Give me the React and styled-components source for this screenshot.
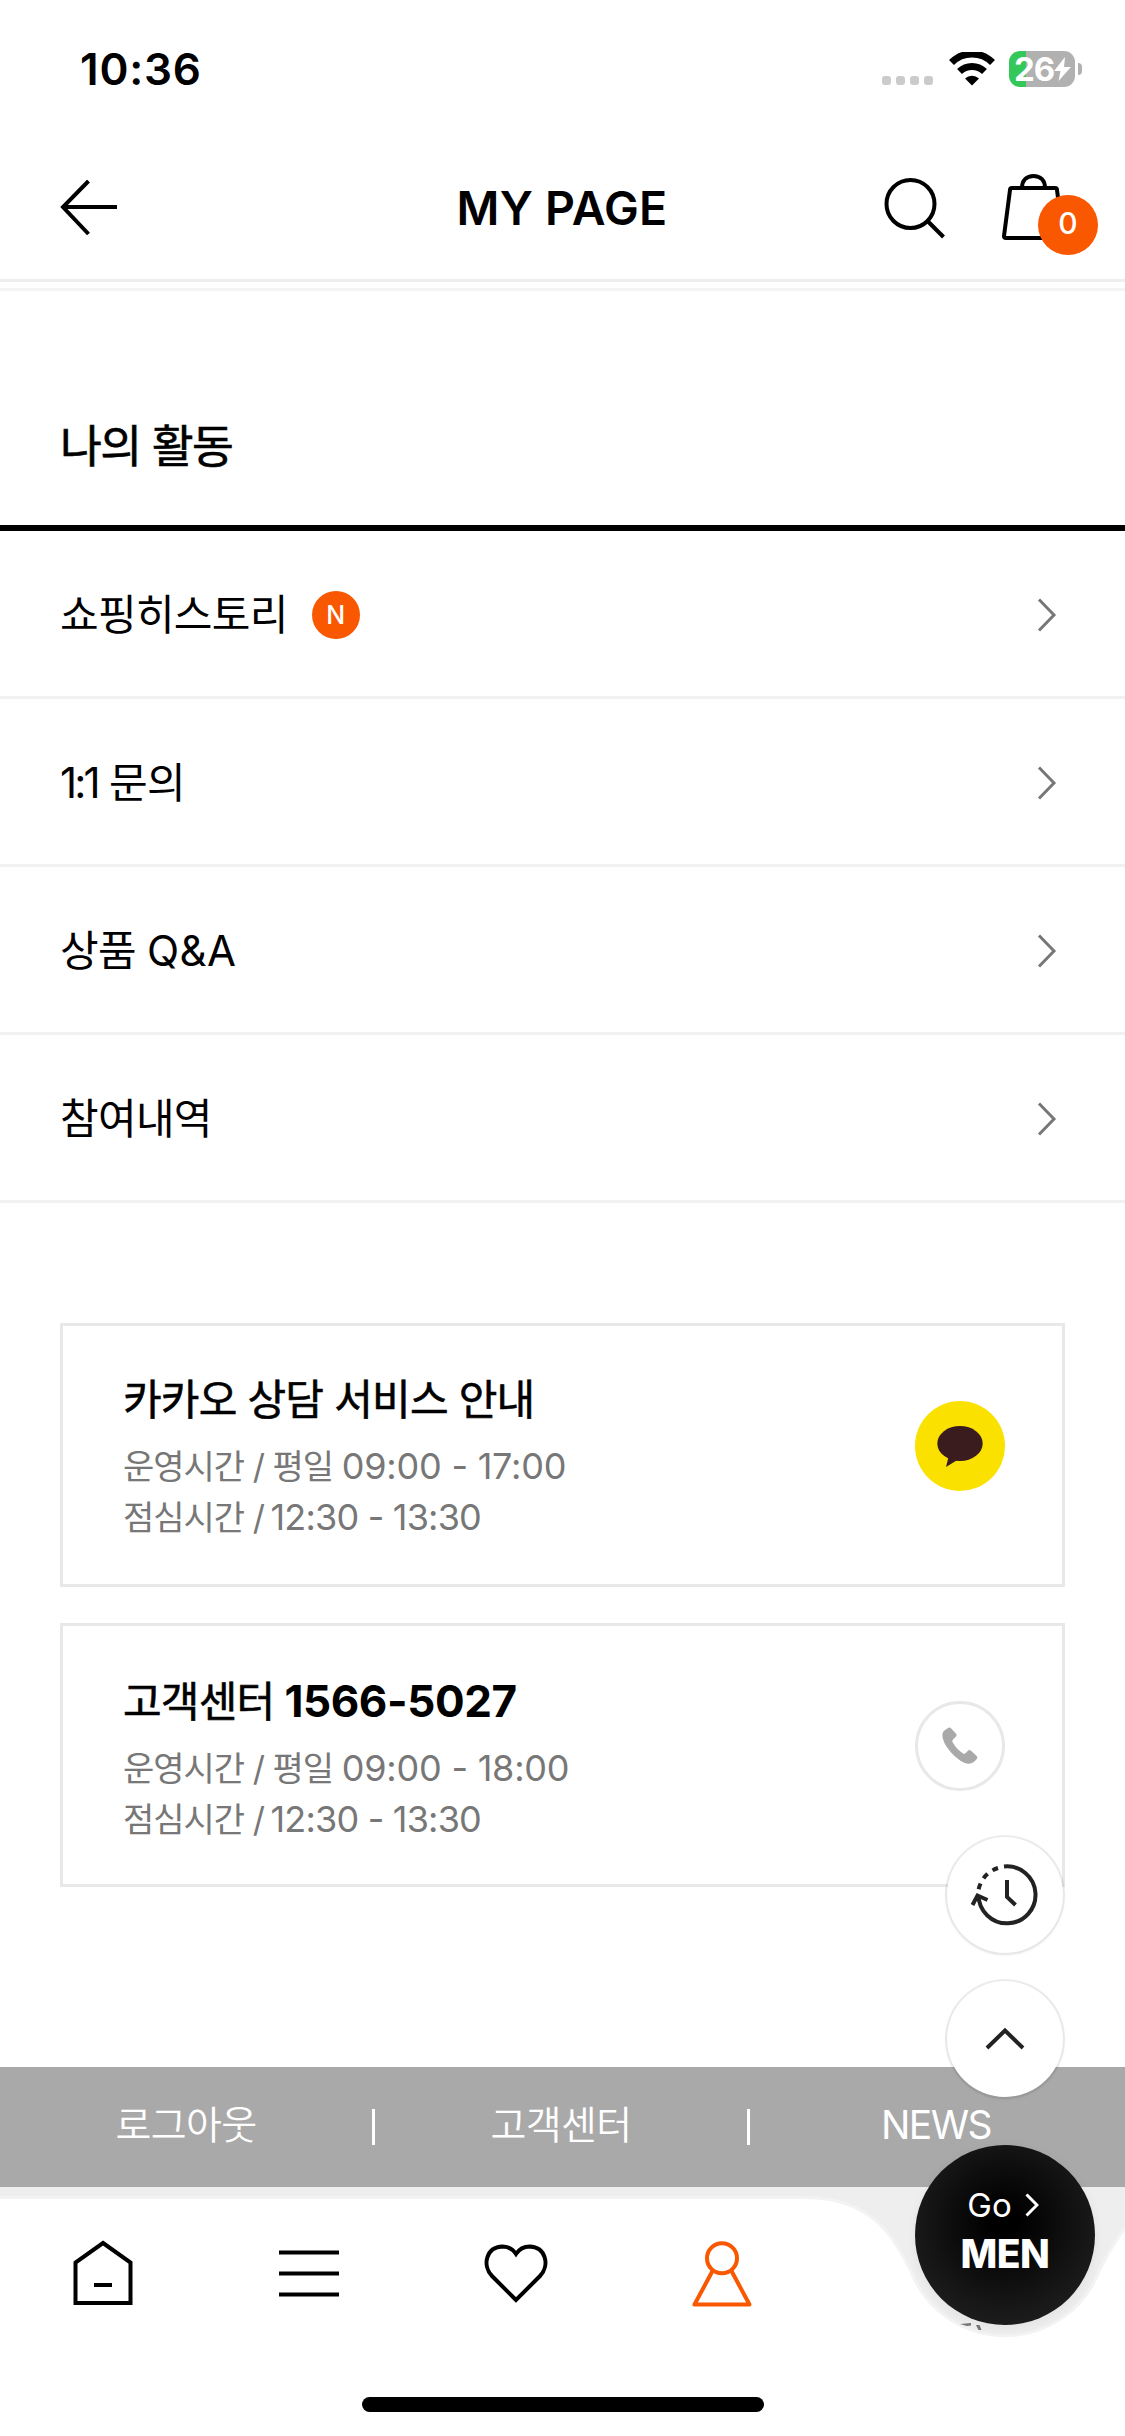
import React from "react";
import styled, { createGlobalStyle } from "styled-components";

const list = [
    { label: "쇼핑히스토리", isNew: true },
    { before: "1:1", spacing: -2.8, label: " 문의" },
    { label: "상품 ", after: "Q&A", spacing: 0.4 },
    { label: "참여내역" },
];

const App = () => {
    return (
        <Page>
            <GlobalStyle />
            <StatusBar>
                <Time>10:36</Time>
                <Signal>
                    <Dot />
                    <Dot />
                    <Dot />
                    <Dot />
                </Signal>
                <WifiIcon width="46" height="34" viewBox="0 0 46 34">
                    <path d="M2.5 10.5a29 29 0 0 1 41 0" strokeWidth="7" />
                    <path d="M10.5 19.5a18 18 0 0 1 25 0" strokeWidth="7" />
                    <path d="M16 26.5a10 10 0 0 1 14 0l-7 7z" fill="#000" stroke="none" />
                </WifiIcon>
                <Battery>
                    <Level>26</Level>
                    <svg width="17" height="24" viewBox="0 0 17 24">
                        <path d="M11 0L0 14h6.500L4.500 24 17 10h-7z" fill="#fff" />
                    </svg>
                </Battery>
                <BatteryTip />
            </StatusBar>

            <Header>
                <Icon width="58" height="56" viewBox="0 0 58 56">
                    <path d="M57 27H3M28.500 1L3 27l25.500 27" />
                </Icon>
                <Title>MY PAGE</Title>
                <HeaderActions>
                    <Icon width="62" height="64" viewBox="0 0 62 64">
                        <circle cx="27.500" cy="29" r="24" />
                        <path d="M44.500 46L60.500 62" />
                    </Icon>
                    <Bag>
                        <Icon width="66" height="66" viewBox="0 0 66 66">
                            <path
                                d="M11 14h43a2 2 0 0 1 2 2l6 46a2 2 0 0 1-2 2H5a2 2 0 0 1-2-2l6-46a2 2 0 0 1 2-2z"
                                strokeLinejoin="round"
                            />
                            <path d="M21 14c0-8 5-12 11.500-12S44 6 44 14" />
                        </Icon>
                        <Count>0</Count>
                    </Bag>
                </HeaderActions>
            </Header>
            <HeaderLine />

            <SectionTitle>나의 활동</SectionTitle>
            <List>
                {list.map((item) => (
                    <Item key={item.label}>
                        <Label>
                            {item.before && <Latin $spacing={item.spacing}>{item.before}</Latin>}
                            {item.label}
                            {item.after && <Latin $spacing={item.spacing}>{item.after}</Latin>}
                        </Label>
                        {item.isNew && <NewMark>N</NewMark>}
                        <Arrow width="20" height="34" viewBox="0 0 20 34">
                            <path d="M2 1.500l15 15.500L2 32.500" />
                        </Arrow>
                    </Item>
                ))}
            </List>

            <Cards>
                <Card>
                    <div>
                        <CardTitle>카카오 상담 서비스 안내</CardTitle>
                        <Hours>
                            운영시간 / 평일 <Clock>09:00 - 17:00</Clock>
                        </Hours>
                        <Hours>
                            점심시간 / <Clock $tight>12:30 - 13:30</Clock>
                        </Hours>
                    </div>
                    <Round $bg="#fae100">
                        <svg width="46" height="44" viewBox="0 0 46 44">
                            <ellipse cx="23" cy="19.500" rx="22.700" ry="17.500" fill="#3b1c1e" />
                            <path d="M12 31l-3 12 13-8z" fill="#3b1c1e" />
                        </svg>
                    </Round>
                </Card>
                <Card $low>
                    <div>
                        <CardTitle>
                            고객센터 <Phone>1566-5027</Phone>
                        </CardTitle>
                        <Hours>
                            운영시간 / 평일 <Clock>09:00 - 18:00</Clock>
                        </Hours>
                        <Hours>
                            점심시간 / <Clock $tight>12:30 - 13:30</Clock>
                        </Hours>
                    </div>
                    <Round $bg="#fff" $line>
                        <svg width="36" height="38" viewBox="0 0 36 38">
                            <path
                                d="M3 3L6.500.8q1.500-.8 2.700.6l5 5.600q1 1.200-.2 2.500l-3 3q-1.200 1.300-.4 2.700 4 7 10.500 11.300 1.200.8 2.400-.3l2.700-2.600q1.300-1 2.500 0l6 5.400q1.300 1.400.2 2.800-3.400 5-9 5Q19 36 9 25.500 0 15 .3 7.500.5 4.500 3 3z"
                                fill="#a9a9a9"
                            />
                        </svg>
                    </Round>
                </Card>
            </Cards>

            <Links>
                <Link>로그아웃</Link>
                <Link>고객센터</Link>
                <Link $latin>NEWS</Link>
            </Links>

            <TabBar>
                <TabShape width="1125" height="249" viewBox="0 0 1125 249">
                    <path
                        d="M-5 10.500H805C850 10.500 876 28 893 53C900 63 904 71 910 82A101 101 0 0 0 1100 82C1106 71 1113 56 1130 34V255H-5z"
                        fill="#fff"
                        stroke="#f3f3f3"
                        strokeWidth="3"
                    />
                    <path d="M960 137l11-1v2.500l-4 .5zM976 138l3.500 0 2 5-3 0z" fill="#777" />
                </TabShape>
                <Tab>
                    <Icon width="60" height="66" viewBox="0 0 60 66">
                        <path d="M30 3L57.500 22.500V63H2.500V22.500zM21 45h18" />
                    </Icon>
                </Tab>
                <Tab>
                    <Icon width="60" height="66" viewBox="0 0 60 66">
                        <path d="M0 12.500h60M0 33.500h60M0 54.500h60" />
                    </Icon>
                </Tab>
                <Tab>
                    <Icon width="64" height="66" viewBox="0 0 64 66">
                        <path d="M32 60L8 36C-2 25.500 2 7 18.500 6.500q8.500 0 13.500 7.500 5-7.500 13.500-7.500c16.500.5 20.500 19 10.500 29.500z" />
                    </Icon>
                </Tab>
                <Tab>
                    <Icon width="60" height="68" viewBox="0 0 60 68" $on>
                        <circle cx="30" cy="19.300" r="15" />
                        <path d="M20.500 32L2.500 65.500h55L39.500 32" strokeLinejoin="round" />
                    </Icon>
                </Tab>
                <HomeBar />
            </TabBar>

            <Floating>
                <FloatButton>
                    <svg width="70" height="66" viewBox="0 0 70 66" fill="none" stroke="#222" strokeWidth="4">
                        <path d="M34 4.500A28.500 28.500 0 1 1 8.500 33" />
                        <path d="M28 6A28.500 28.500 0 0 0 8.500 28" strokeDasharray="6 6" />
                        <path d="M2.500 43L7.500 33.500L17.500 38" />
                        <path d="M37 18v17l8.500 8" />
                    </svg>
                </FloatButton>
                <FloatButton>
                    <svg width="42" height="24" viewBox="0 0 42 24" fill="none" stroke="#222" strokeWidth="4">
                        <path d="M3 21L21 3.500L39 21" />
                    </svg>
                </FloatButton>
                <MenButton>
                    <Go>
                        Go
                        <svg width="14" height="24" viewBox="0 0 14 24" fill="none" stroke="#fff" strokeWidth="3">
                            <path d="M1.500 1.500l10.500 10.500-10.500 10.500" />
                        </svg>
                    </Go>
                    <Men>MEN</Men>
                </MenButton>
            </Floating>
        </Page>
    );
};

const GlobalStyle = createGlobalStyle`
    * {
        box-sizing: border-box;
    }
    body {
        margin: 0;
        background: #fff;
    }
    svg {
        display: block;
        flex: none;
    }
`;

const Page = styled.div`
    position: relative;
    width: 1125px;
    height: 2436px;
    overflow: hidden;
    display: flex;
    flex-direction: column;
    background: #fff;
    color: #000;
    font-family: Inter, "Noto Sans CJK KR", sans-serif;
    white-space: nowrap;
`;

const StatusBar = styled.div`
    height: 138px;
    padding: 0 43px 0 80px;
    display: flex;
    align-items: center;
`;

const Time = styled.div`
    flex: 1;
    font-size: 44px;
    font-weight: 600;
    letter-spacing: 0.8px;
`;

const Signal = styled.div`
    display: flex;
    gap: 5px;
    margin: 23px 16px 0 0;
`;

const Dot = styled.i`
    width: 9px;
    height: 9px;
    border-radius: 3px;
    background: #cbcbcb;
`;

const WifiIcon = styled.svg`
    fill: none;
    stroke: #000;
    margin-right: 14px;
`;

const Battery = styled.div`
    width: 66px;
    height: 36px;
    padding-left: 5px;
    border-radius: 11px;
    display: flex;
    align-items: center;
    gap: 1px;
    background: linear-gradient(90deg, #34c759 17px, #b1b1b1 17px);
`;

const Level = styled.span`
    width: 39px;
    color: #fff;
    font-size: 33px;
    font-weight: 700;
    letter-spacing: -1px;
`;

const BatteryTip = styled.i`
    width: 4px;
    height: 12px;
    margin-left: 3px;
    border-radius: 0 4px 4px 0;
    background: #b1b1b1;
`;

const Header = styled.header`
    height: 144px;
    padding: 0 57px 1px 60px;
    border-bottom: 3px solid #eee;
    display: grid;
    grid-template-columns: 1fr auto 1fr;
    align-items: center;
`;

const Icon = styled.svg`
    fill: none;
    stroke: ${(props) => (props.$on ? "#f95700" : "#000")};
    stroke-width: 4;
`;

const Title = styled.h1`
    margin: 0 4px 0 0;
    font-size: 46.500px;
    font-weight: 600;
    letter-spacing: 0.3px;
`;

const HeaderActions = styled.div`
    display: flex;
    align-items: center;
    justify-content: flex-end;
    gap: 56px;
    margin: -2px 1px 0 0;
`;

const Bag = styled.div`
    position: relative;
`;

const Count = styled.span`
    position: absolute;
    left: 37px;
    top: 21px;
    width: 60px;
    height: 60px;
    border-radius: 50%;
    background: #f95700;
    color: #fff;
    font-size: 30px;
    font-weight: 500;
    line-height: 56px;
    text-align: center;
`;

const HeaderLine = styled.div`
    height: 9px;
    border-bottom: 3px solid #f4f4f4;
`;

const SectionTitle = styled.h2`
    height: 240px;
    margin: 0;
    padding: 114px 60px 0;
    border-bottom: 6px solid #000;
    font-size: 45.500px;
    font-weight: 400;
    line-height: 84px;
    letter-spacing: -1.6px;
    -webkit-text-stroke: 0.6px #000;
`;

const List = styled.ul`
    margin: 0;
    padding: 0;
    list-style: none;
`;

const Item = styled.li`
    height: 168px;
    padding: 3px 68px 0 60px;
    border-bottom: 3px solid #f1f1f1;
    display: flex;
    align-items: center;
`;

const Label = styled.span`
    padding-bottom: 1px;
    font-size: 42px;
    line-height: 60px;
    letter-spacing: -0.7px;
`;

const Latin = styled.span`
    letter-spacing: ${(props) => props.$spacing}px;
`;

const NewMark = styled.b`
    width: 48px;
    height: 48px;
    margin-left: 24px;
    border-radius: 50%;
    background: #f95700;
    color: #fff;
    font-size: 25px;
    font-weight: 500;
    line-height: 48px;
    text-align: center;
`;

const Arrow = styled.svg`
    margin-left: auto;
    fill: none;
    stroke: #777;
    stroke-width: 3;
`;

const Cards = styled.div`
    display: grid;
    gap: 36px;
    padding: 120px 60px 180px;
`;

const Card = styled.section`
    height: 264px;
    padding: ${(props) => (props.$low ? "45px" : "43px")} 57px 0 60px;
    border: 3px solid #e8e8e8;
    display: flex;
    justify-content: space-between;
`;

const CardTitle = styled.h3`
    height: 62px;
    margin: 0 0 10px;
    font-size: 42px;
    font-weight: 400;
    line-height: 62px;
    letter-spacing: -0.8px;
    -webkit-text-stroke: 0.6px #000;
`;

const Phone = styled.b`
    margin-left: -1px;
    font-size: 44px;
    line-height: 1;
    letter-spacing: -0.4px;
    -webkit-text-stroke: 0;
`;

const Hours = styled.p`
    margin: 0;
    color: #777;
    font-size: 34px;
    line-height: 51px;
    letter-spacing: -1px;
`;

const Clock = styled.span`
    margin-left: ${(props) => (props.$tight ? "-2px" : "0")};
    font-size: 36px;
    line-height: 1;
    letter-spacing: ${(props) => (props.$tight ? "-0.8px" : "-0.2px")};
`;

const Round = styled.div`
    width: 90px;
    height: 90px;
    margin-top: ${(props) => (props.$line ? "30px" : "32px")};
    border-radius: 50%;
    border: ${(props) => (props.$line ? "3px solid #e8e8e8" : "0")};
    background: ${(props) => props.$bg};
    display: flex;
    align-items: center;
    justify-content: center;
`;

const Links = styled.footer`
    height: 120px;
    display: grid;
    grid-template-columns: repeat(3, 1fr);
    align-items: center;
    background: #a9a9a9;
    color: #fff;
`;

const Link = styled.div`
    height: 36px;
    border-right: 3px solid #fff;
    font-size: 39px;
    font-weight: ${(props) => (props.$latin ? 400 : 350)};
    line-height: 32px;
    letter-spacing: ${(props) => (props.$latin ? "-1.6px" : "-0.6px")};
    text-align: center;

    &:last-child {
        border-color: transparent;
    }
`;

const TabBar = styled.nav`
    position: relative;
    height: 249px;
    padding: 51px 0 0;
    display: flex;
    background: #eee;
`;

const TabShape = styled.svg`
    position: absolute;
    left: 0;
    top: 0;
`;

const Tab = styled.a`
    position: relative;
    width: 206.300px;
    height: 70px;
    display: flex;
    align-items: center;
    justify-content: center;
`;

const HomeBar = styled.i`
    position: absolute;
    left: 362px;
    bottom: 24px;
    width: 402px;
    height: 15px;
    border-radius: 8px;
    background: #000;
`;

const Floating = styled.div`
    position: absolute;
    right: 30px;
    bottom: 111px;
    display: flex;
    flex-direction: column;
    align-items: center;
`;

const FloatButton = styled.div`
    width: 116px;
    height: 116px;
    margin-bottom: 28px;
    border-radius: 50%;
    background: #fff;
    box-shadow: 0 0 0 2px rgba(0, 0, 0, 0.06), 0 1px 2px 2px rgba(0, 0, 0, 0.04);
    display: flex;
    align-items: center;
    justify-content: center;

    & + & {
        margin-bottom: 48px;
    }
`;

const MenButton = styled.div`
    width: 180px;
    height: 180px;
    padding-top: 38px;
    border-radius: 50%;
    background: radial-gradient(circle at 50% 43%, #000 10%, #161616 60%, #222 90%);
    box-shadow: 0 3px 8px 2px rgba(0, 0, 0, 0.04);
    color: #fff;
    text-align: center;
`;

const Go = styled.div`
    display: flex;
    align-items: center;
    justify-content: center;
    gap: 13px;
    padding-right: 4px;
    font-size: 33px;
    line-height: 44px;
`;

const Men = styled.div`
    font-size: 39px;
    font-weight: 800;
    line-height: 54px;
    letter-spacing: -0.5px;
`;

export default App;
